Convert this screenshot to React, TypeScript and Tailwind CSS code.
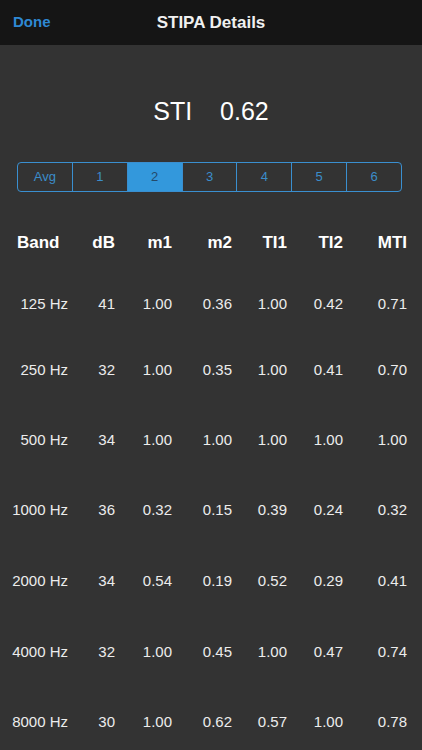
import React from "react";

const tabs = ["Avg", "1", "2", "3", "4", "5", "6"];

const rows = [
  { band: "125 Hz", v: ["41", "1.00", "0.36", "1.00", "0.42", "0.71"], h: "h-[63px]" },
  { band: "250 Hz", v: ["32", "1.00", "0.35", "1.00", "0.41", "0.70"], h: "h-[69px]" },
  { band: "500 Hz", v: ["34", "1.00", "1.00", "1.00", "1.00", "1.00"], h: "h-[70px]" },
  { band: "1000 Hz", v: ["36", "0.32", "0.15", "0.39", "0.24", "0.32"], h: "h-[71px]" },
  { band: "2000 Hz", v: ["34", "0.54", "0.19", "0.52", "0.29", "0.41"], h: "h-[71px]" },
  { band: "4000 Hz", v: ["32", "1.00", "0.45", "1.00", "0.47", "0.74"], h: "h-[71px]" },
  { band: "8000 Hz", v: ["30", "1.00", "0.62", "0.57", "1.00", "0.78"], h: "h-[68px]" },
];

const grid = "grid grid-cols-[68px_47px_57px_60px_55px_56px_64px] items-center";

export default function App() {
  return (
    <div className="h-[750px] w-[422px] overflow-hidden bg-[#333333] font-['Liberation_Sans',Arial,sans-serif] text-[#ececec]">
      {/* nav bar */}
      <div className="relative flex h-[45px] items-center justify-center bg-[#151515]">
        <span className="absolute left-[13px] text-[15px] font-semibold text-[#2e88d3]">Done</span>
        <span className="text-[17px] font-bold text-[#f0f0f0]">STIPA Details</span>
      </div>

      {/* summary */}
      <div className="flex h-[117px] items-center justify-center gap-[28px] pt-[16px] text-[25px] text-white">
        <span>STI</span>
        <span>0.62</span>
      </div>

      {/* tabs */}
      <div className="ml-[17px] flex h-[30px] w-[385px] overflow-hidden rounded-[4px] border border-[#3a8fd0]">
        {tabs.map((t, i) => (
          <div
            key={t}
            className={
              "flex flex-1 items-center justify-center text-[13px] " +
              (i > 0 ? "border-l border-[#3a8fd0] " : "") +
              (i === 2 ? "bg-[#3398dc] text-[#244a6a]" : "text-[#3b8dca]")
            }
          >
            {t}
          </div>
        ))}
      </div>

      {/* table */}
      <div className="mt-[21px]">
        <div className={grid + " h-[60px] text-[17px] font-bold text-white"}>
          <span className="pl-[17px]">Band</span>
          <span className="text-right">dB</span>
          <span className="text-right">m1</span>
          <span className="text-right">m2</span>
          <span className="text-right">TI1</span>
          <span className="text-right">TI2</span>
          <span className="text-right">MTI</span>
        </div>
        {rows.map((r) => (
          <div key={r.band} className={grid + " text-[15px] text-[#ececec] " + r.h}>
            <span className="text-right">{r.band}</span>
            {r.v.map((x, i) => (
              <span key={i} className="text-right">
                {x}
              </span>
            ))}
          </div>
        ))}
      </div>
    </div>
  );
}
